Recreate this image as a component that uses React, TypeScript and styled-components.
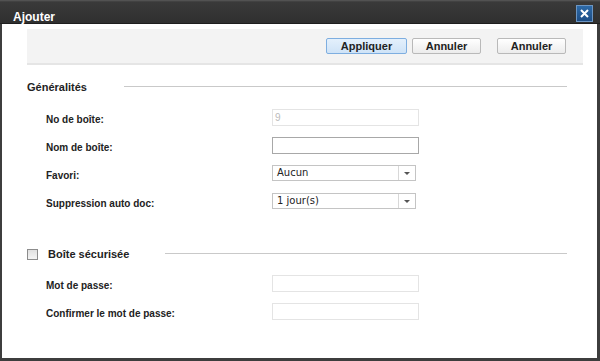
import { createGlobalStyle, styled } from "styled-components";

const Global = createGlobalStyle`
  html, body { margin: 0; padding: 0; background: #fff; }
  body { font-family: "Liberation Sans", Arial, sans-serif; }
`;

const Window = styled.div`
  width: 600px;
  height: 361px;
  box-sizing: border-box;
  display: flex;
  flex-direction: column;
  background: #3d3d3d;
  padding: 0 3px 3px 2px;
`;

const TitleBar = styled.div`
  height: 24px;
  margin: 0 -3px 0 -2px;
  padding: 0 7px 0 13px;
  display: flex;
  align-items: center;
  justify-content: space-between;
  background: linear-gradient(#5a5a5a 0, #3a3a3a 2px, #2f2f2f 100%);
  border-bottom: 1px solid #1e1e1e;
  box-sizing: border-box;
`;

const Title = styled.span`
  color: #fff;
  font-weight: bold;
  font-size: 12px;
  padding-top: 10px;
`;

const CloseBtn = styled.div`
  width: 17px;
  height: 17px;
  box-sizing: border-box;
  background: linear-gradient(#2d6aa8, #1d4d85);
  border: 1px solid #6c95c2;
  display: flex;
  align-items: center;
  justify-content: center;
  margin-top: 4px;
`;

const Body = styled.div`
  flex: 1;
  background: #fff;
  padding: 5px 14px 0 25px;
  display: flex;
  flex-direction: column;
`;

const Toolbar = styled.div`
  height: 25px;
  background: #f3f3f3;
  border-bottom: 2px solid #e5e5e5;
  display: flex;
  align-items: flex-start;
  justify-content: flex-end;
  padding: 9px 17px 0 0;
  box-sizing: content-box;
`;

const Button = styled.button<{ $primary?: boolean; $w: number; $gap: number }>`
  width: ${(p) => p.$w}px;
  height: 16px;
  margin-left: ${(p) => p.$gap}px;
  padding: 0;
  font-family: "Liberation Sans", Arial, sans-serif;
  font-weight: bold;
  font-size: 11px;
  color: #222;
  border-radius: 2px;
  border: 1px solid ${(p) => (p.$primary ? "#7eaee0" : "#b9b9b9")};
  background: ${(p) =>
    p.$primary
      ? "linear-gradient(#e4f0fc, #cfe3f7)"
      : "linear-gradient(#ffffff, #ececec)"};
`;

const SectionHead = styled.div<{ $top: number }>`
  display: flex;
  align-items: center;
  margin-top: ${(p) => p.$top}px;
  height: 16px;
`;

const SectionTitle = styled.span`
  font-weight: bold;
  font-size: 11px;
  color: #222;
`;

const Rule = styled.div<{ $left: number }>`
  flex: 1;
  height: 1px;
  background: #c9c9c9;
  margin: -1px 16px 0 ${(p) => p.$left}px;
`;

const Check = styled.span`
  width: 11px;
  height: 11px;
  box-sizing: border-box;
  border: 1px solid #8c8c8c;
  background: linear-gradient(#e0e0e0, #f4f4f4);
  margin-right: 10px;
`;

const Fields = styled.div<{ $top: number }>`
  display: flex;
  flex-direction: column;
  margin-top: ${(p) => p.$top}px;
`;

const Row = styled.div`
  height: 28px;
  display: grid;
  grid-template-columns: 226px auto;
  align-items: center;
  padding-left: 19px;
`;

const Label = styled.span`
  font-weight: bold;
  font-size: 10px;
  color: #222;
  padding-top: 5px;
`;

const Input = styled.div<{ $dim?: boolean }>`
  width: 147px;
  height: 17px;
  box-sizing: border-box;
  border: 1px solid ${(p) => (p.$dim ? "#e4e4e4" : "#a8a8a8")};
  font-size: 10px;
  color: #bbb;
  padding: 2px 0 0 2px;
`;

const Select = styled.div`
  width: 144px;
  height: 16px;
  box-sizing: border-box;
  border: 1px solid #c4c4c4;
  display: flex;
  font-size: 11px;
  color: #222;
`;

const SelectText = styled.span`
  flex: 1;
  padding: 1px 0 0 4px;
  font-family: "DejaVu Sans", sans-serif;
  font-size: 10px;
  border-right: 1px solid #d8d8d8;
`;

const Arrow = styled.span`
  width: 16px;
  display: flex;
  align-items: center;
  justify-content: center;
  &::after {
    content: "";
    border-left: 3px solid transparent;
    border-right: 3px solid transparent;
    border-top: 3px solid #555;
  }
`;

function SelectBox({ value }: { value: string }) {
  return (
    <Select>
      <SelectText>{value}</SelectText>
      <Arrow />
    </Select>
  );
}

export default function App() {
  return (
    <>
      <Global />
      <Window>
        <TitleBar>
          <Title>Ajouter</Title>
          <CloseBtn>
            <svg width="9" height="9" viewBox="0 0 9 9">
              <path d="M1 1L8 8M8 1L1 8" stroke="#fff" strokeWidth="2" />
            </svg>
          </CloseBtn>
        </TitleBar>
        <Body>
          <Toolbar>
            <Button $primary $w={81} $gap={0}>Appliquer</Button>
            <Button $w={69} $gap={5}>Annuler</Button>
            <Button $w={69} $gap={16}>Annuler</Button>
          </Toolbar>
          <SectionHead $top={14}>
            <SectionTitle>Généralités</SectionTitle>
            <Rule $left={37} />
          </SectionHead>
          <Fields $top={8}>
            <Row>
              <Label>No de boîte:</Label>
              <Input $dim>9</Input>
            </Row>
            <Row>
              <Label>Nom de boîte:</Label>
              <Input />
            </Row>
            <Row>
              <Label>Favori:</Label>
              <SelectBox value="Aucun" />
            </Row>
            <Row>
              <Label>Suppression auto doc:</Label>
              <SelectBox value="1 jour(s)" />
            </Row>
          </Fields>
          <SectionHead $top={31}>
            <Check />
            <SectionTitle>Boîte sécurisée</SectionTitle>
            <Rule $left={36} />
          </SectionHead>
          <Fields $top={7}>
            <Row>
              <Label>Mot de passe:</Label>
              <Input $dim />
            </Row>
            <Row>
              <Label>Confirmer le mot de passe:</Label>
              <Input $dim />
            </Row>
          </Fields>
        </Body>
      </Window>
    </>
  );
}
